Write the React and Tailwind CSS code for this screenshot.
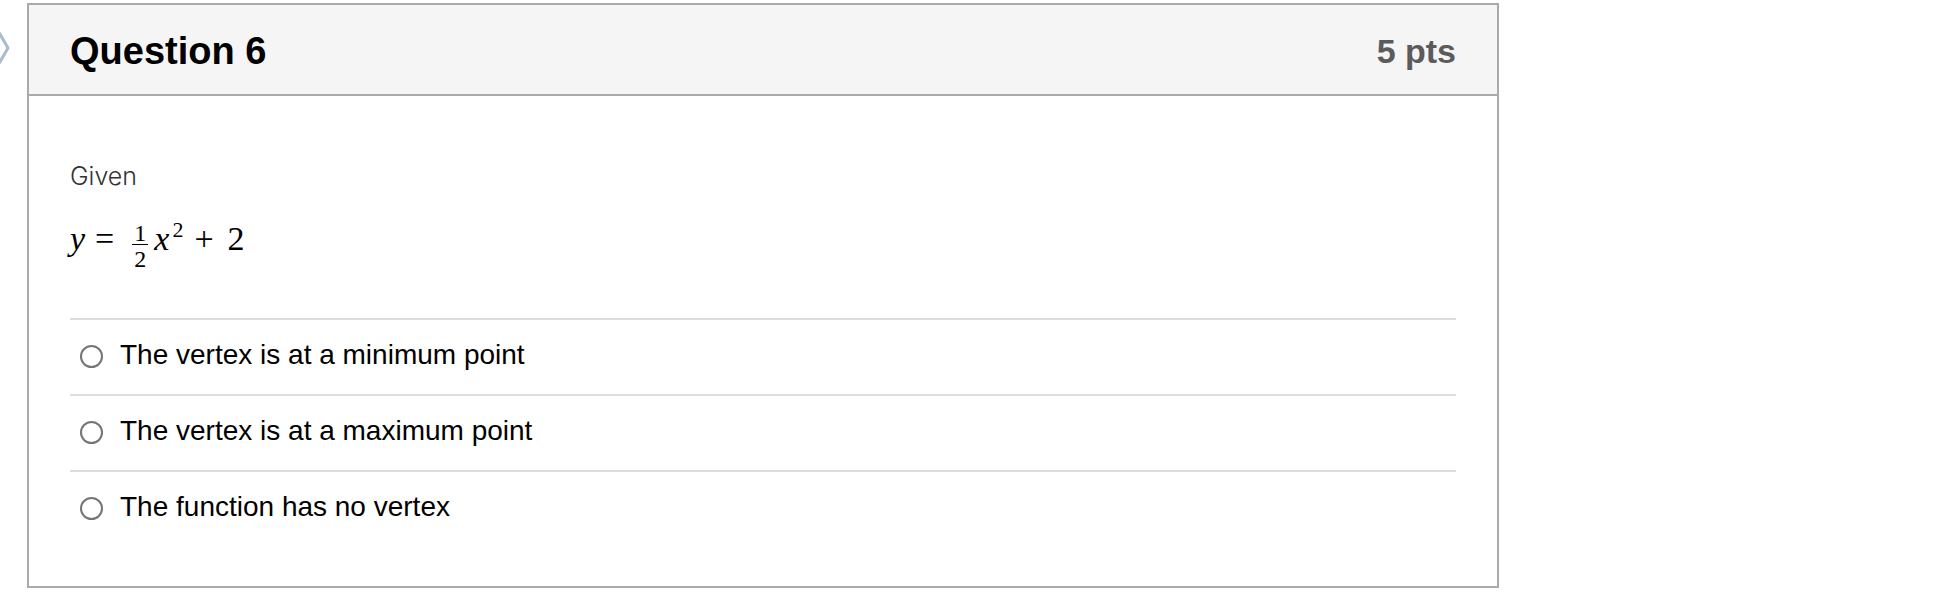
const OPTIONS = [
  'The vertex is at a minimum point',
  'The vertex is at a maximum point',
  'The function has no vertex',
]

function Radio() {
  return (
    <span className="mt-[7px] ml-[10px] block h-[23px] w-[23px] shrink-0 rounded-full border-2 border-[#747474] bg-white" />
  )
}

function Equation() {
  return (
    <p
      className="mt-[20px] mb-[55px] h-[48px] whitespace-nowrap text-[34px] leading-[48px] text-black"
      style={{ fontFamily: '"Liberation Serif", "DejaVu Serif", serif' }}
    >
      <span className="italic">y</span>
      <span className="ml-[10px]">=</span>
      <span className="ml-[18px] inline-flex flex-col items-center align-[9px] text-[24px]">
        <span className="px-[2px] pb-[3px] leading-[15px]">1</span>
        <span className="border-t border-black px-[2px] pt-[7px] leading-[15px]">2</span>
      </span>
      <span className="ml-[6px] italic">x</span>
      <span className="relative top-[-13px] ml-[3px] text-[22px]">2</span>
      <span className="ml-[11px]">+</span>
      <span className="ml-[14px]">2</span>
    </p>
  )
}

export default function App() {
  return (
    <div
      className="relative min-h-screen bg-white pt-[3px] pl-[27px]"
      style={{ fontFamily: '"Liberation Sans", Arial, sans-serif' }}
    >
      <svg className="absolute left-0 top-[28px]" width="12" height="40" viewBox="0 0 12 40">
        <polyline
          points="-3,1 8,20 -3,39"
          fill="none"
          stroke="#a6bbd0"
          strokeWidth="3"
          strokeLinejoin="round"
        />
      </svg>

      <section className="w-[1472px] border-2 border-[#aaaaaa] bg-white">
        <header className="flex h-[91px] items-center justify-between border-b-2 border-[#aaaaaa] bg-[#f5f5f5] px-[41px] pt-[2px]">
          <h2 className="text-[38px] font-bold leading-none text-black">Question 6</h2>
          <span className="text-[34px] font-bold leading-none text-[#5b5b5b]">5 pts</span>
        </header>

        <div className="px-[41px] pt-[62px] pb-[40px]">
          <p
            className="text-[25px] font-light leading-[37px] text-[#333333]"
            style={{ fontFamily: 'Inter, "Liberation Sans", sans-serif' }}
          >
            Given
          </p>
          <Equation />

          <div>
            {OPTIONS.map((label) => (
              <label
                key={label}
                className="flex h-[76px] items-start gap-[17px] border-t-2 border-[#dddddd] pt-[18px]"
              >
                <Radio />
                <span className="text-[28px] leading-[34px] text-black">{label}</span>
              </label>
            ))}
          </div>
        </div>
      </section>
    </div>
  )
}
